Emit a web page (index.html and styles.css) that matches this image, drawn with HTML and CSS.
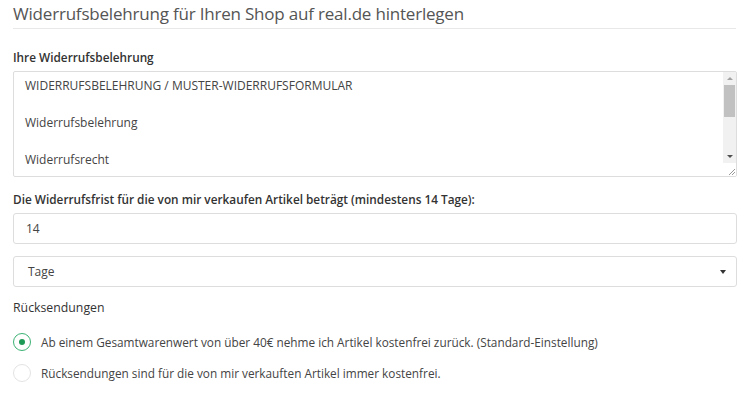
FILE: index.html
```html
<!DOCTYPE html>
<html lang="de">
<head>
<meta charset="utf-8">
<link rel="stylesheet" href="styles.css">
</head>
<body>
<div class="page">
  <h1 class="title">Widerrufsbelehrung für Ihren Shop auf real.de hinterlegen</h1>
  <label class="label label-bold">Ihre Widerrufsbelehrung</label>
  <div class="textarea">
    <div class="textarea-content">
      <p>WIDERRUFSBELEHRUNG / MUSTER-WIDERRUFSFORMULAR</p>
      <p>Widerrufsbelehrung</p>
      <p>Widerrufsrecht</p>
    </div>
    <div class="scrollbar">
      <div class="sb-track">
        <div class="sb-arrow sb-up"></div>
        <div class="sb-thumb"></div>
        <div class="sb-space"></div>
        <div class="sb-arrow sb-down"></div>
      </div>
      <div class="resizer">
        <svg width="12" height="12" viewBox="0 0 12 12"><path d="M11 5 L5 11 M11 8 L8 11" stroke="#999" stroke-width="1" fill="none"/></svg>
      </div>
    </div>
  </div>
  <label class="label label-medium">Die Widerrufsfrist für die von mir verkaufen Artikel beträgt (mindestens 14 Tage):</label>
  <div class="input">14</div>
  <div class="select"><span>Tage</span><span class="caret"></span></div>
  <div class="label label-plain">Rücksendungen</div>
  <div class="radio-row">
    <span class="radio checked"><span class="dot"></span></span>
    <span class="radio-text">Ab einem Gesamtwarenwert von über 40€ nehme ich Artikel kostenfrei zurück. (Standard-Einstellung)</span>
  </div>
  <div class="radio-row">
    <span class="radio"></span>
    <span class="radio-text">Rücksendungen sind für die von mir verkauften Artikel immer kostenfrei.</span>
  </div>
</div>
</body>
</html>
```
FILE: styles.css
```css
html, body {
  margin: 0;
  padding: 0;
  background: #fff;
}
body {
  font-family: "Open Sans", "Noto Sans", sans-serif;
  color: #333;
}
.page {
  width: 724px;
  padding: 0 10px 0 13px;
}
.title {
  margin: 0;
  font-size: 17px;
  letter-spacing: -0.2px;
  font-weight: 400;
  color: #555;
  line-height: 24px;
  padding-top: 2px;
  padding-bottom: 2px;
  border-bottom: 1px solid #e8e8e8;
  width: 723px;
}
.label {
  display: block;
  font-size: 11.8px;
  line-height: 15px;
}
.label-bold {
  font-weight: 600;
  margin-top: 21px;
  margin-bottom: 6px;
  color: #333;
}
.label-medium {
  font-weight: 600;
  margin-top: 15px;
  margin-bottom: 6px;
  color: #333;
}
.label-plain {
  font-weight: 400;
  margin-top: 13px;
  color: #333;
  font-size: 12.3px;
}
.textarea {
  display: flex;
  height: 104px;
  border: 1px solid #ddd;
  border-radius: 2px;
  overflow: hidden;
}
.textarea-content {
  flex: 1;
  padding: 5px 11px;
  font-size: 12px;
  color: #444;
}
.textarea-content p {
  margin: 0 0 19px;
  line-height: 18px;
}
.scrollbar {
  width: 13px;
  display: flex;
  flex-direction: column;
}
.sb-track {
  flex: 1;
  background: #f1f1f1;
  display: flex;
  flex-direction: column;
  align-items: center;
}
.sb-arrow {
  width: 0;
  height: 0;
  border-left: 3px solid transparent;
  border-right: 3px solid transparent;
  margin: 5px 0;
}
.sb-up {
  border-bottom: 3px solid #a3a3a3;
}
.sb-down {
  border-top: 3px solid #505050;
}
.sb-thumb {
  width: 11px;
  height: 32px;
  background: #c1c1c1;
}
.sb-space {
  flex: 1;
}
.resizer {
  height: 13px;
  background: #fff;
  display: flex;
  align-items: flex-end;
  justify-content: flex-end;
}
.resizer svg {
  display: block;
}
.input, .select {
  border: 1px solid #ddd;
  border-radius: 3px;
  box-sizing: border-box;
  height: 31px;
  display: flex;
  align-items: center;
  font-size: 12px;
  color: #444;
}
.input {
  padding: 0 12px;
}
.select {
  margin-top: 12px;
  padding: 0 10px 0 14px;
  justify-content: space-between;
}
.caret {
  width: 0;
  height: 0;
  border-left: 3px solid transparent;
  border-right: 3px solid transparent;
  border-top: 4px solid #333;
}
.radio-row {
  display: flex;
  align-items: center;
  gap: 10px;
  height: 18px;
  font-size: 11.8px;
  color: #444;
}
.radio-row + .radio-row {
  margin-top: 13px;
}
.label-plain + .radio-row {
  margin-top: 18px;
}
.radio {
  width: 18px;
  height: 18px;
  box-sizing: border-box;
  border: 1px solid #e3e3e3;
  border-radius: 50%;
  display: flex;
  align-items: center;
  justify-content: center;
  flex: none;
}
.radio.checked {
  border-color: #3bb273;
}
.dot {
  width: 6px;
  height: 6px;
  border-radius: 50%;
  background: #1e9a56;
}
```
